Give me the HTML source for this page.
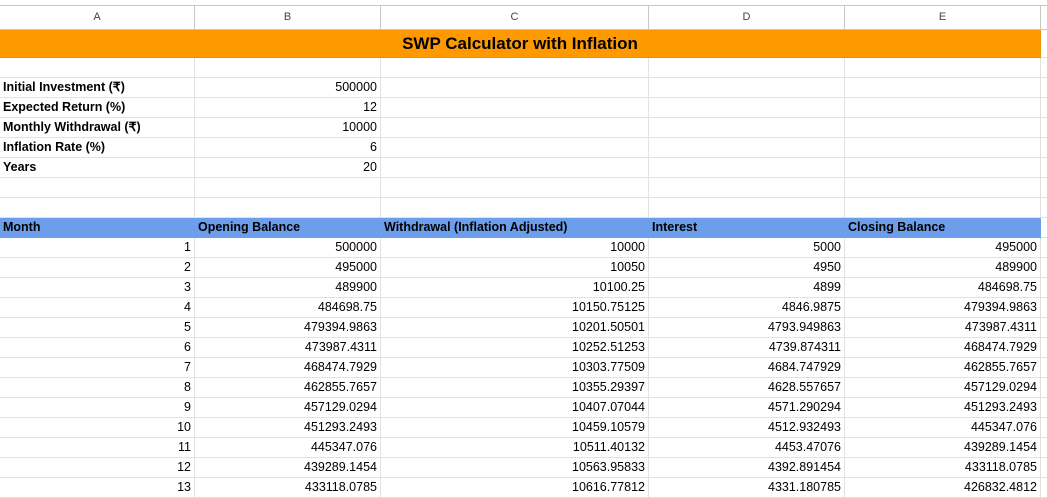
<!DOCTYPE html>
<html><head><meta charset="utf-8"><style>
body{margin:0;width:1047px;height:496px;overflow:hidden;background:#fff;font-family:"Liberation Sans",sans-serif;position:relative;}
table{border-collapse:collapse;table-layout:fixed;position:absolute;top:5px;left:-1px;width:1061px;}
td{border:1px solid #e2e2e2;padding:0 3px;height:19px;font-size:12.5px;color:#000;white-space:nowrap;overflow:hidden;line-height:19px;}
tr.h td{height:23px;border-color:#c7c7c7;text-align:center;color:#444;font-size:11px;}
tr.t td{height:27px;background:#ff9900;border-color:#e69500;text-align:center;font-weight:bold;font-size:17px;}
td.b{font-weight:bold;}
td.r{text-align:right;}
tr.bl td{background:#6d9eeb;font-weight:bold;border-color:#6d9eeb;}
td.x{background:#fff!important;border-color:#e2e2e2!important;}
</style></head><body>
<table>
<colgroup><col style="width:195px"><col style="width:186px"><col style="width:268px"><col style="width:196px"><col style="width:196px"><col style="width:20px"></colgroup>
<tr class="h"><td>A</td><td>B</td><td>C</td><td>D</td><td>E</td><td></td></tr>
<tr class="t"><td colspan="5">SWP Calculator with Inflation</td><td class="x"></td></tr>
<tr><td></td><td></td><td></td><td></td><td></td><td></td></tr>
<tr><td class="b">Initial Investment (₹)</td><td class="r">500000</td><td></td><td></td><td></td><td></td></tr>
<tr><td class="b">Expected Return (%)</td><td class="r">12</td><td></td><td></td><td></td><td></td></tr>
<tr><td class="b">Monthly Withdrawal (₹)</td><td class="r">10000</td><td></td><td></td><td></td><td></td></tr>
<tr><td class="b">Inflation Rate (%)</td><td class="r">6</td><td></td><td></td><td></td><td></td></tr>
<tr><td class="b">Years</td><td class="r">20</td><td></td><td></td><td></td><td></td></tr>
<tr><td></td><td></td><td></td><td></td><td></td><td></td></tr>
<tr><td></td><td></td><td></td><td></td><td></td><td></td></tr>
<tr class="bl"><td>Month</td><td>Opening Balance</td><td>Withdrawal (Inflation Adjusted)</td><td>Interest</td><td>Closing Balance</td><td class="x"></td></tr>
<tr><td class="r">1</td><td class="r">500000</td><td class="r">10000</td><td class="r">5000</td><td class="r">495000</td><td></td></tr>
<tr><td class="r">2</td><td class="r">495000</td><td class="r">10050</td><td class="r">4950</td><td class="r">489900</td><td></td></tr>
<tr><td class="r">3</td><td class="r">489900</td><td class="r">10100.25</td><td class="r">4899</td><td class="r">484698.75</td><td></td></tr>
<tr><td class="r">4</td><td class="r">484698.75</td><td class="r">10150.75125</td><td class="r">4846.9875</td><td class="r">479394.9863</td><td></td></tr>
<tr><td class="r">5</td><td class="r">479394.9863</td><td class="r">10201.50501</td><td class="r">4793.949863</td><td class="r">473987.4311</td><td></td></tr>
<tr><td class="r">6</td><td class="r">473987.4311</td><td class="r">10252.51253</td><td class="r">4739.874311</td><td class="r">468474.7929</td><td></td></tr>
<tr><td class="r">7</td><td class="r">468474.7929</td><td class="r">10303.77509</td><td class="r">4684.747929</td><td class="r">462855.7657</td><td></td></tr>
<tr><td class="r">8</td><td class="r">462855.7657</td><td class="r">10355.29397</td><td class="r">4628.557657</td><td class="r">457129.0294</td><td></td></tr>
<tr><td class="r">9</td><td class="r">457129.0294</td><td class="r">10407.07044</td><td class="r">4571.290294</td><td class="r">451293.2493</td><td></td></tr>
<tr><td class="r">10</td><td class="r">451293.2493</td><td class="r">10459.10579</td><td class="r">4512.932493</td><td class="r">445347.076</td><td></td></tr>
<tr><td class="r">11</td><td class="r">445347.076</td><td class="r">10511.40132</td><td class="r">4453.47076</td><td class="r">439289.1454</td><td></td></tr>
<tr><td class="r">12</td><td class="r">439289.1454</td><td class="r">10563.95833</td><td class="r">4392.891454</td><td class="r">433118.0785</td><td></td></tr>
<tr><td class="r">13</td><td class="r">433118.0785</td><td class="r">10616.77812</td><td class="r">4331.180785</td><td class="r">426832.4812</td><td></td></tr>
</table>
</body></html>
